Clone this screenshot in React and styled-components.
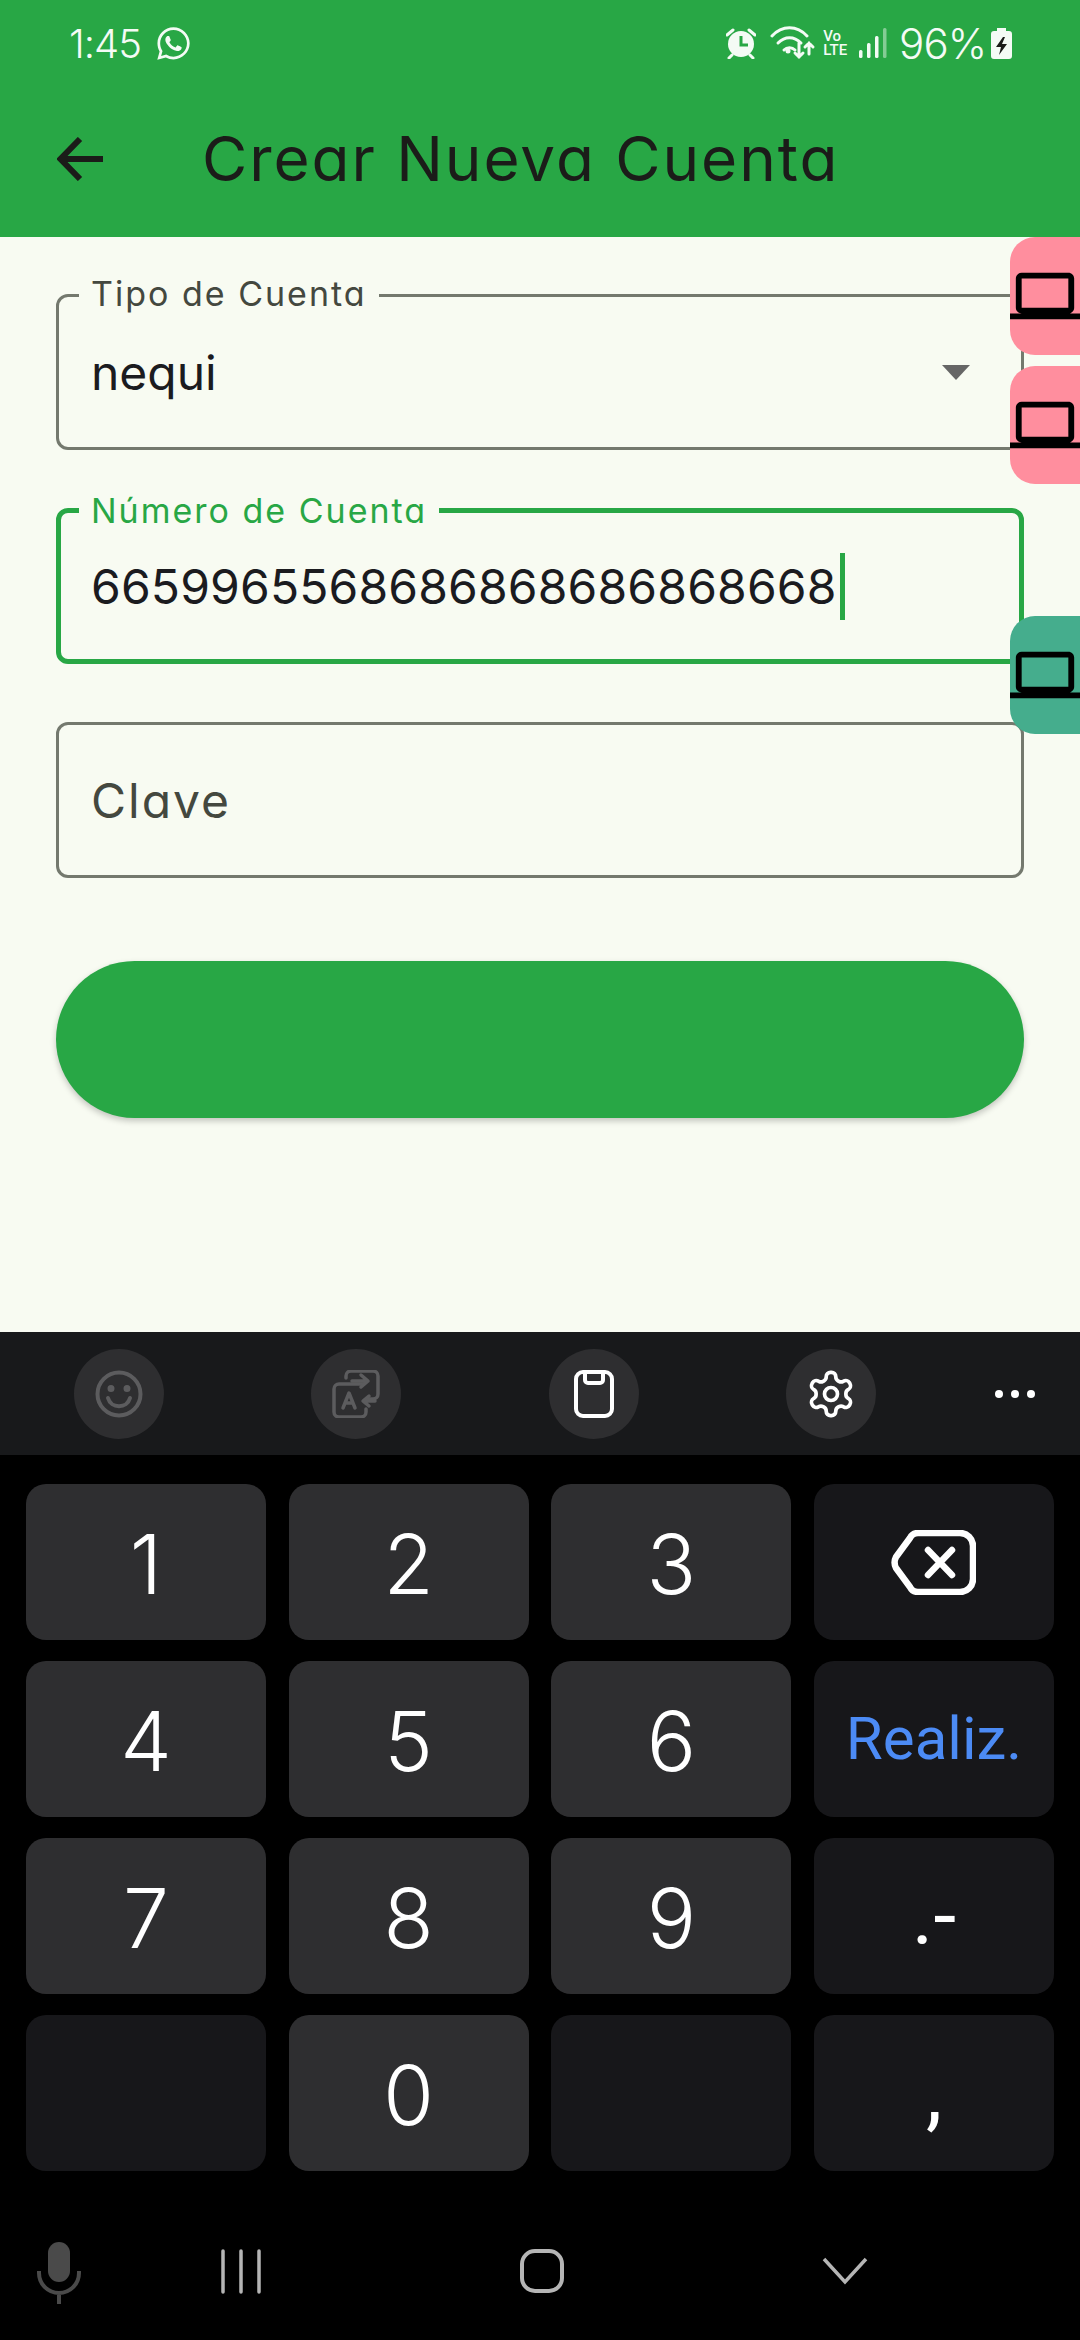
import React from 'react';
import styled, { createGlobalStyle } from 'styled-components';
import { FaWhatsapp } from 'react-icons/fa';
import { MdLaptop } from 'react-icons/md';
import { LuSettings } from 'react-icons/lu';

const GREEN = '#28a745';

const GlobalStyle = createGlobalStyle`
  html, body {
    margin: 0;
    padding: 0;
    background: #000;
  }
  * {
    box-sizing: border-box;
  }
`;

const Page = styled.div`
  width: 1080px;
  height: 2340px;
  position: relative;
  overflow: hidden;
  display: flex;
  flex-direction: column;
  background: #f8fbf2;
  font-family: Inter, 'Liberation Sans', sans-serif;
  font-feature-settings: 'cv11' 1;
`;

const Header = styled.header`
  height: 237px;
  background: ${GREEN};
  flex-shrink: 0;
`;

const StatusBar = styled.div`
  height: 86px;
  padding: 0 68px 0 69px;
  display: flex;
  align-items: center;
  color: #f4fbf5;
  font-size: 40px;
  font-weight: 300;
`;

const Time = styled.span`
  letter-spacing: -1px;
  margin-right: 14px;
`;

const StatusIcons = styled.div`
  margin-left: auto;
  display: flex;
  align-items: center;
`;

const VoLte = styled.span`
  display: flex;
  flex-direction: column;
  margin: 0 12px 0 7px;
  font: 500 15px/14px Roboto, sans-serif;
`;

const Percent = styled.span`
  margin: 0 5px 0 12px;
  font-size: 42px;
  letter-spacing: -1px;
`;

const AppBar = styled.div`
  height: 151px;
  padding: 0 0 6px 57px;
  display: flex;
  align-items: center;
`;

const Title = styled.h1`
  margin: 0 0 0 99px;
  font-size: 62px;
  font-weight: 400;
  letter-spacing: 1.95px;
  color: #1b1c19;
`;

const Form = styled.main`
  height: 1095px;
  flex-shrink: 0;
  padding: 57px 56px 0;
  display: flex;
  flex-direction: column;
  gap: 58px;
`;

const Field = styled.div`
  position: relative;
  height: 156px;
  padding: 0 51px 0 ${(p) => (p.$focused ? 30 : 32)}px;
  display: flex;
  align-items: center;
  justify-content: space-between;
  border: ${(p) => (p.$focused ? `5px solid ${GREEN}` : '3px solid #74796e')};
  border-radius: 12px;
`;

const FieldLabel = styled.label`
  position: absolute;
  top: ${(p) => (p.$focused ? -26 : -27)}px;
  left: ${(p) => (p.$focused ? 18 : 20)}px;
  padding: 0 12px;
  background: #f8fbf2;
  font-size: 34px;
  line-height: 48px;
  letter-spacing: 2px;
  color: ${(p) => (p.$focused ? GREEN : '#44483f')};
`;

const Value = styled.span`
  font-size: 48px;
  letter-spacing: ${(p) => p.$spacing || 0}px;
  color: ${(p) => (p.$muted ? '#44483f' : '#1b1b1f')};
`;

const Caret = styled.span`
  width: 5px;
  height: 67px;
  margin-left: 3px;
  background: ${GREEN};
`;

const InputRow = styled.div`
  display: flex;
  align-items: center;
`;

const DropArrow = styled.span`
  width: 0;
  height: 0;
  border-left: 14px solid transparent;
  border-right: 14px solid transparent;
  border-top: 15px solid #666;
`;

const SubmitButton = styled.button`
  height: 157px;
  margin-top: 25px;
  border: 0;
  border-radius: 79px;
  background: ${GREEN};
  box-shadow: 0 3px 6px rgba(0, 0, 0, 0.22);
`;

const SideTab = styled.div`
  position: absolute;
  right: 0;
  top: ${(p) => p.$top}px;
  width: 70px;
  height: 118px;
  display: flex;
  align-items: center;
  border-radius: 25px 0 0 25px;
  background: ${(p) => p.$color};
  color: #000;
`;

const Toolbar = styled.div`
  height: 123px;
  flex-shrink: 0;
  padding-left: 74px;
  display: flex;
  align-items: center;
  gap: 147.33px;
  background: #18191b;
`;

const ToolButton = styled.div`
  width: 90px;
  height: 90px;
  display: flex;
  align-items: center;
  justify-content: center;
  border-radius: 50%;
  background: #2e2e30;
  color: ${(p) => (p.$dim ? '#5c5c5e' : '#fff')};
`;

const MoreDots = styled.div`
  margin-left: -28px;
  display: flex;
  gap: 8px;
  span {
    width: 8px;
    height: 8px;
    border-radius: 50%;
    background: #fff;
  }
`;

const Keypad = styled.div`
  height: 717px;
  flex-shrink: 0;
  padding: 29px 26px 0;
  display: grid;
  grid-template-columns: repeat(4, 240px);
  grid-auto-rows: 156px;
  column-gap: 22.67px;
  row-gap: 21px;
  background: #000;
`;

const Key = styled.div`
  display: flex;
  align-items: center;
  justify-content: center;
  padding-top: ${(p) => (p.$action ? 0 : 5)}px;
  border-radius: 20px;
  background: ${(p) => (p.$action ? '#17171a' : '#2e2e30')};
  color: ${(p) => p.$color || '#fff'};
  font-family: ${(p) => (p.$action ? 'Roboto' : 'Inter')}, sans-serif;
  font-size: ${(p) => p.$size || 82}px;
  font-weight: ${(p) => p.$weight || 300};
  line-height: 1;
`;

const NavBar = styled.nav`
  flex: 1;
  padding: 70px 0 0 36px;
  display: flex;
  align-items: flex-start;
  background: #000;
`;

const NavIcon = styled.svg`
  height: 62px;
  margin-left: ${(p) => p.$gap || 0}px;
  flex-shrink: 0;
`;

const AlarmIcon = () => (
  <svg width="30" height="32" viewBox="0 0 30 32">
    <path d="M1 8l6-5M29 8l-6-5M6 28l-3 3M24 28l3 3" stroke="#f4fbf5" strokeWidth="3" strokeLinecap="round" />
    <circle cx="15" cy="17" r="13" fill="#f4fbf5" />
    <path d="M15 9v9h7" fill="none" stroke={GREEN} strokeWidth="3" />
  </svg>
);

const WifiIcon = () => (
  <svg width="46" height="34" viewBox="0 0 46 34" style={{ marginLeft: 14 }}>
    <g fill="none" stroke="#f4fbf5" strokeWidth="3" strokeLinecap="round">
      <path d="M2 10c10-11 25-11 35 0" />
      <path d="M8 17c7-7 16-7 23 0" />
      <path d="M14 24c3-3 8-3 11 0" />
      <path d="M29 17v14M25 27l4 4 4-4" />
      <path d="M39 28V17M35 21l4-4 4 4" />
    </g>
    <circle cx="18" cy="25" r="2.5" fill="#f4fbf5" />
  </svg>
);

const SignalIcon = () => (
  <svg width="28" height="30" viewBox="0 0 28 30">
    <g fill="#f4fbf5">
      <rect x="0" y="22" width="3.5" height="8" rx="1.5" />
      <rect x="8" y="15" width="3.5" height="15" rx="1.5" />
      <rect x="16" y="8" width="3.5" height="22" rx="1.5" />
      <rect x="24" y="0" width="3.5" height="30" rx="1.5" opacity="0.45" />
    </g>
  </svg>
);

const BatteryIcon = () => (
  <svg width="21" height="31" viewBox="0 0 21 31">
    <path d="M6 0h9v3h3a3 3 0 0 1 3 3v22a3 3 0 0 1-3 3H3a3 3 0 0 1-3-3V6a3 3 0 0 1 3-3h3z" fill="#f4fbf5" />
    <path d="M12 9l-7 10h5l-2 8 8-11h-5l3-7z" fill="#1b1c19" />
  </svg>
);

const BackArrow = () => (
  <svg width="46" height="44" viewBox="0 0 46 44" fill="none" stroke="#1b1c19" strokeWidth="6">
    <path d="M46 22H5M23 2L3.500 22 23 42" />
  </svg>
);

const SmileIcon = () => (
  <svg width="48" height="48" viewBox="0 0 48 48" fill="none" stroke="currentColor" strokeWidth="4">
    <circle cx="24" cy="24" r="21.500" />
    <path d="M13 28c3 11 19 11 22 0" strokeLinecap="round" />
    <circle cx="16" cy="18.500" r="1.500" fill="currentColor" />
    <circle cx="32" cy="18.500" r="1.500" fill="currentColor" />
  </svg>
);

const TranslateIcon = () => (
  <svg width="48" height="48" viewBox="0 0 48 48" fill="none" stroke="currentColor" strokeWidth="3.500" strokeLinecap="round" strokeLinejoin="round">
    <path d="M14 8V6a5 5 0 0 1 5-5h22a5 5 0 0 1 5 5v18a5 5 0 0 1-5 5h-4" />
    <path d="M31 14H7a5 5 0 0 0-5 5v23a5 5 0 0 0 5 5h22a5 5 0 0 0 5-5v-3" />
    <path d="M20 11h15M29 5l7 6-7 6" />
    <path d="M43 31H32M37 26l-6 5 6 5" />
    <path d="M11 38l6-15 6 15M13 33h8" />
  </svg>
);

const ClipboardIcon = () => (
  <svg width="40" height="48" viewBox="0 0 40 48" fill="none" stroke="currentColor" strokeWidth="4">
    <rect x="2" y="2" width="36" height="44" rx="7" />
    <path d="M11 2v8a3 3 0 0 0 3 3h12a3 3 0 0 0 3-3V2" />
  </svg>
);

const BackspaceIcon = () => (
  <svg width="85" height="65" viewBox="0 0 85 65" fill="none" stroke="#fff" strokeWidth="6.500" strokeLinejoin="round">
    <path d="M27 3h42a13 13 0 0 1 13 13v33a13 13 0 0 1-13 13H27a9 9 0 0 1-8-5L5 38a12 12 0 0 1 0-11L19 8a9 9 0 0 1 8-5z" />
    <path d="M37 20l24 25M61 20L37 45" strokeLinecap="round" />
  </svg>
);

const keys = [
  { label: '1' },
  { label: '2' },
  { label: '3' },
  { icon: <BackspaceIcon />, action: true },
  { label: '4' },
  { label: '5' },
  { label: '6' },
  { label: 'Realiz.', action: true, size: 60, weight: 400, color: '#4c8bf5' },
  { label: '7' },
  { label: '8' },
  { label: '9' },
  { label: '.-', action: true, size: 82, weight: 400 },
  { action: true },
  { label: '0' },
  { action: true },
  { label: ',', action: true, size: 82, weight: 400 },
];

const App = () => (
  <Page>
    <GlobalStyle />
    <Header>
      <StatusBar>
        <Time>1:45</Time>
        <FaWhatsapp size={37} />
        <StatusIcons>
          <AlarmIcon />
          <WifiIcon />
          <VoLte>
            <span>Vo</span>
            <span>LTE</span>
          </VoLte>
          <SignalIcon />
          <Percent>96%</Percent>
          <BatteryIcon />
        </StatusIcons>
      </StatusBar>
      <AppBar>
        <BackArrow />
        <Title>Crear Nueva Cuenta</Title>
      </AppBar>
    </Header>

    <Form>
      <Field>
        <FieldLabel>Tipo de Cuenta</FieldLabel>
        <Value>nequi</Value>
        <DropArrow />
      </Field>
      <Field $focused>
        <FieldLabel $focused>Número de Cuenta</FieldLabel>
        <InputRow>
          <Value $spacing={0.15}>6659965568686868686868668</Value>
          <Caret />
        </InputRow>
      </Field>
      <Field>
        <Value $muted $spacing={2}>Clave</Value>
      </Field>
      <SubmitButton type="button" aria-label="Crear" />
    </Form>

    <SideTab $top={237} $color="#ff8e9e"><MdLaptop size={70} /></SideTab>
    <SideTab $top={366} $color="#ff8e9e"><MdLaptop size={70} /></SideTab>
    <SideTab $top={616} $color="#45ad8d"><MdLaptop size={70} /></SideTab>

    <Toolbar>
      <ToolButton $dim><SmileIcon /></ToolButton>
      <ToolButton $dim><TranslateIcon /></ToolButton>
      <ToolButton><ClipboardIcon /></ToolButton>
      <ToolButton><LuSettings size={52} strokeWidth={1.7} /></ToolButton>
      <MoreDots><span /><span /><span /></MoreDots>
    </Toolbar>

    <Keypad>
      {keys.map((k, i) => (
        <Key key={i} $action={k.action} $size={k.size} $weight={k.weight} $color={k.color}>
          {k.icon || k.label}
        </Key>
      ))}
    </Keypad>

    <NavBar>
      <NavIcon width="46" viewBox="0 0 46 62" fill="none" stroke="#4a4a4a" strokeWidth="4">
        <rect x="12" y="0" width="22" height="40" rx="11" fill="#4a4a4a" stroke="none" />
        <path d="M3 29v2a20 20 0 0 0 40 0v-2M23 51v11" />
      </NavIcon>
      <NavIcon $gap={139} width="40" viewBox="0 0 40 62" stroke="#b5b5b5" strokeWidth="3.500" strokeLinecap="round">
        <path d="M2 9v41M20 9v41M38 9v41" />
      </NavIcon>
      <NavIcon $gap={258} width="46" viewBox="0 0 46 62" fill="none" stroke="#b5b5b5" strokeWidth="4">
        <rect x="3" y="9" width="40" height="40" rx="13" />
      </NavIcon>
      <NavIcon $gap={257} width="46" viewBox="0 0 46 62" fill="none" stroke="#b5b5b5" strokeWidth="3.500">
        <path d="M2 17l21 23 21-23" />
      </NavIcon>
    </NavBar>
  </Page>
);

export default App;
